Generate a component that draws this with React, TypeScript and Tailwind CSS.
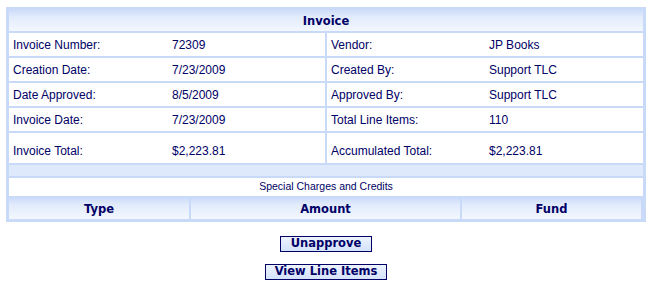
import React from "react";

const rows: [string, string, string, string][] = [
  ["Invoice Number:", "72309", "Vendor:", "JP Books"],
  ["Creation Date:", "7/23/2009", "Created By:", "Support TLC"],
  ["Date Approved:", "8/5/2009", "Approved By:", "Support TLC"],
  ["Invoice Date:", "7/23/2009", "Total Line Items:", "110"],
  ["Invoice Total:", "$2,223.81", "Accumulated Total:", "$2,223.81"],
];

const hdr =
  "bg-[linear-gradient(to_bottom,#cddcf9_0%,#e3ecfc_35%,#f3f7fe_100%)] flex items-center justify-center pt-[2px] font-bold text-[11.5px] text-[#000066] [font-family:'DejaVu_Sans',Verdana,sans-serif]";

export default function App() {
  return (
    <div className="w-[652px] h-[281px] bg-white [font-family:'Liberation_Sans',Arial,sans-serif] text-[#000066]">
      <div className="pt-[7px] pl-[6px]">
        <div className="w-[640px] bg-[#c9daf8] p-[3px] flex flex-col gap-[2px]">
          <div className={`h-[21px] ${hdr}`}>Invoice</div>
          {rows.map((r, i) => {
            const cell = `w-[316px] bg-white flex items-center text-[12px] ${i === 4 ? "pt-[5px]" : ""}`;
            return (
              <div
                key={i}
                className={`flex gap-[2px] ${i === 4 ? "h-[30px]" : "h-[23px]"}`}
              >
                <div className={cell}>
                  <div className="w-[163px] pl-[4px]">{r[0]}</div>
                  <div>{r[1]}</div>
                </div>
                <div className={cell}>
                  <div className="w-[162px] pl-[4px]">{r[2]}</div>
                  <div>{r[3]}</div>
                </div>
              </div>
            );
          })}
          <div className="h-[11px] bg-[#dfe9fc]" />
          <div className="h-[18px] bg-white flex items-center justify-center text-[10.5px]">
            Special Charges and Credits
          </div>
          <div className="flex gap-[2px] h-[21px]">
            <div className={`w-[180px] ${hdr}`}>Type</div>
            <div className={`w-[269px] ${hdr}`}>Amount</div>
            <div className={`w-[179px] ${hdr}`}>Fund</div>
          </div>
        </div>
      </div>
      <div className="flex flex-col items-center gap-[12px] mt-[14px] w-[652px]">
        <button className="w-[92px] h-[16px] border border-[#000066] bg-[linear-gradient(to_bottom,#eef3fe_0%,#d4e2fb_100%)] text-[11.5px] font-bold text-[#000066] [font-family:'DejaVu_Sans',Verdana,sans-serif] leading-none flex items-center justify-center">
          Unapprove
        </button>
        <button className="w-[122px] h-[16px] border border-[#000066] bg-[linear-gradient(to_bottom,#eef3fe_0%,#d4e2fb_100%)] text-[11.5px] font-bold text-[#000066] [font-family:'DejaVu_Sans',Verdana,sans-serif] leading-none flex items-center justify-center">
          View Line Items
        </button>
      </div>
    </div>
  );
}
